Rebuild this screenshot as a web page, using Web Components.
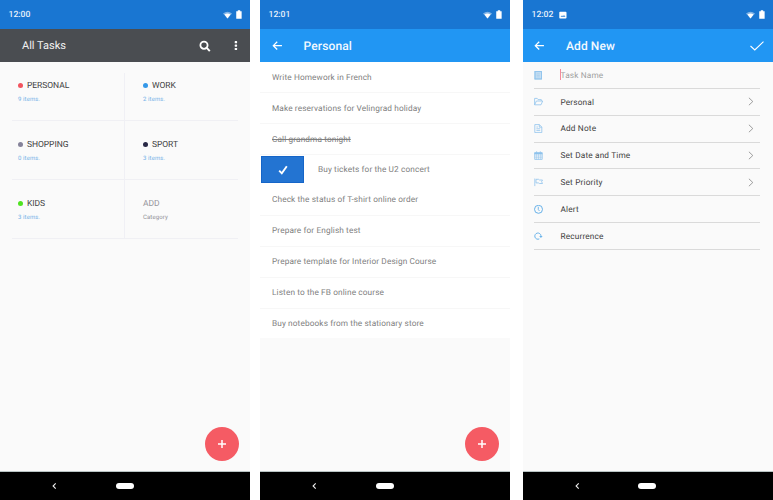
<!DOCTYPE html>
<html lang="en">
<head>
<meta charset="utf-8">
<title>Tasks</title>
<style>
body{margin:0;background:#fff;font-family:Roboto,"Liberation Sans",sans-serif;text-rendering:geometricPrecision;width:773px;height:500px;overflow:hidden}
main{display:grid;grid-template-columns:250px 250px 250px;column-gap:10px;height:500px}
main>:last-child{margin-left:3px;width:250px}
</style>
</head>
<body>
<main>
  <phone-screen time="12:00" fab>
    <app-bar slot="bar" tone="dark" heading="All Tasks"></app-bar>
    <category-grid>
      <category-tile name="PERSONAL" note="9 items." dot="#f2545f"></category-tile>
      <category-tile name="WORK" note="2 items." dot="#3498e8"></category-tile>
      <category-tile name="SHOPPING" note="0 items." dot="#85839a"></category-tile>
      <category-tile name="SPORT" note="3 items." dot="#282845"></category-tile>
      <category-tile name="KIDS" note="3 items." dot="#4fe320"></category-tile>
      <category-tile name="ADD" note="Category"></category-tile>
    </category-grid>
  </phone-screen>
  <phone-screen time="12:01" fab>
    <app-bar slot="bar" heading="Personal" back></app-bar>
    <task-list>
      <task-row>Write Homework in French</task-row>
      <task-row>Make reservations for Velingrad holiday</task-row>
      <task-row done>Call grandma tonight</task-row>
      <task-row swiped>Buy tickets for the U2 concert</task-row>
      <task-row>Check the status of T-shirt online order</task-row>
      <task-row>Prepare for English test</task-row>
      <task-row>Prepare template for Interior Design Course</task-row>
      <task-row>Listen to the FB online course</task-row>
      <task-row>Buy notebooks from the stationary store</task-row>
    </task-list>
  </phone-screen>
  <phone-screen time="12:02" picture>
    <app-bar slot="bar" heading="Add New" back confirm></app-bar>
    <form-row icon="task" field>Task Name</form-row>
    <form-row icon="folder" more>Personal</form-row>
    <form-row icon="note" more>Add Note</form-row>
    <form-row icon="calendar" more>Set Date and Time</form-row>
    <form-row icon="flag" more>Set Priority</form-row>
    <form-row icon="clock">Alert</form-row>
    <form-row icon="repeat">Recurrence</form-row>
  </phone-screen>
</main>
<script>
class Base extends HTMLElement {
  connectedCallback() {
    if (this.shadowRoot) return;
    this.attachShadow({mode: 'open'}).innerHTML =
      '<style>:host,*{box-sizing:border-box}svg{display:block;flex:none}' + this.css() + '</style>' + this.html();
  }
  at(n) { return this.getAttribute(n); }
  has(n) { return this.hasAttribute(n); }
}

customElements.define('phone-screen', class extends Base {
  css() { return `
    :host{display:grid;grid-template-rows:29px 33px 1fr 29px;position:relative;background:#fafafa;height:500px}
    .status{background:#1976d2;display:flex;align-items:center;padding:0 8.5px 0 8.5px;color:#e9f2fb;font-size:8.6px;font-weight:500}
    .status span{padding-top:1px}
    .status .pic{margin-left:6px}
    .status .wifi{margin-left:auto;margin-right:4px}
    .nav{background:#000;border-top:1px solid #b9c4c4;display:flex;align-items:center;padding-left:52px}
    .home{width:18px;height:6.6px;border-radius:4px;background:#fff;margin-left:59px}
    :host([picture]) .home{margin-left:58px}
    .fab{position:absolute;left:205px;top:427px;width:34px;height:34px;border-radius:50%;background:#f55b64;display:grid;place-items:center}`; }
  html() { return `
    <div class="status"><span>${this.at('time')}</span>
      ${this.has('picture') ? '<svg class="pic" width="8" height="8" viewBox="0 0 8 8"><rect x=".3" y=".8" width="7.2" height="6.6" rx=".9" fill="#fff"/><path d="M1.5 6 3 4.2l1 1L5 3.8 6.5 6z" fill="#5d9fe0"/></svg>' : ''}
      <svg class="wifi" width="9" height="8" viewBox="0 0 9 8"><path d="M0 2.4Q4.5-.9 9 2.4L4.5 7.6z" fill="#fff" opacity=".45"/><path d="M1.5 3.5Q4.5 1.6 7.5 3.5L4.5 7.4z" fill="#fff"/></svg>
      <svg width="6" height="9" viewBox="0 0 5 9" preserveAspectRatio="none"><path d="M1.5.3h2v1h1.2v7.4H.2V1.3h1.3z" fill="#fff"/></svg>
    </div>
    <slot name="bar"></slot>
    <div><slot></slot></div>
    <div class="nav"><svg width="5" height="6" viewBox="0 0 5 6"><path d="M3.7.4 1.1 3l2.6 2.6" fill="none" stroke="#eee" stroke-width="1.1"/></svg><div class="home"></div></div>
    ${this.has('fab') ? '<div class="fab"><svg width="10" height="10" viewBox="0 0 10 10"><path d="M5 1v8M1 5h8" stroke="#fff" stroke-width="1.5"/></svg></div>' : ''}`; }
});

customElements.define('app-bar', class extends Base {
  css() { return `
    :host{display:flex;align-items:center;background:#2196f3;color:#f2f9ff;padding:0 0 0 12px;font-size:12px;font-weight:500}
    :host([tone=dark]){background:#4a4d51;color:#f1f1f1;padding-left:22px;font-size:11px;font-weight:400}
    .title{margin-left:20.5px;letter-spacing:.14px}
    :host([confirm]) .title{margin-left:21px;letter-spacing:.1px}
    :host([confirm]){padding-left:11px}
    :host([tone=dark]) .title{margin-left:0;letter-spacing:0}
    .find{margin-left:auto;margin-right:23.5px}.dots{margin-right:12px}.ok{margin-left:auto;margin-right:9px}`; }
  html() { return `
    ${this.has('back') ? '<svg width="11" height="10" viewBox="0 0 11 10.8"><path d="M5.2.8 1 5l4.2 4.2M1 5h9.3" fill="none" stroke="#fff" stroke-width="1.4"/></svg>' : ''}
    <span class="title">${this.at('heading')}</span>
    ${this.at('tone') === 'dark' ? '<svg class="find" width="12" height="12" viewBox="0 0 12 12"><circle cx="5" cy="5.2" r="3.6" fill="none" stroke="#fff" stroke-width="1.8"/><path d="m7.7 7.9 3.1 3.2" stroke="#fff" stroke-width="2"/></svg><svg class="dots" width="4" height="10" viewBox="0 0 4 10"><g fill="#fff"><rect x=".7" y=".1" width="2.4" height="2.2" rx=".6"/><rect x=".7" y="3.5" width="2.4" height="2.2" rx=".6"/><rect x=".7" y="6.9" width="2.4" height="2.2" rx=".6"/></g></svg>' : ''}
    ${this.has('confirm') ? '<svg class="ok" width="14" height="10" viewBox="0 0 14 10"><path d="m.5 5 4.3 4L13.5.6" fill="none" stroke="#fff" stroke-width="1.1"/></svg>' : ''}`; }
});

customElements.define('category-grid', class extends Base {
  css() { return `
    :host{display:block;padding:0 12px}
    .g{display:grid;grid-template-columns:113px 113px;grid-auto-rows:59px;
      background:linear-gradient(#f0f0f5,#f0f0f5) 112px 11px/1px 166px no-repeat}`; }
  html() { return '<div class="g"><slot></slot></div>'; }
});

customElements.define('category-tile', class extends Base {
  css() { return `
    :host{display:flex;flex-direction:column;border-bottom:1px solid #f0f0f4;padding:17px 0 0 6px}
    :host(:nth-child(even)){padding-left:18px}
    .n{display:flex;align-items:center;gap:4px;height:13px;font-size:8.5px;color:#404040;letter-spacing:-.05px}
    .n span{padding-top:1px}
    i{width:5px;height:5px;border-radius:50%;background:${this.at('dot') || 'none'}}
    .c{font-size:6px;line-height:13px;padding-top:.6px;color:#74b2e8;letter-spacing:.1px}
    :host(:not([dot])) .n{color:#96969c}
    :host(:not([dot])) .c{color:#909096}`; }
  html() { return `<div class="n">${this.at('dot') ? '<i></i>' : ''}<span>${this.at('name')}</span></div><div class="c">${this.at('note')}</div>`; }
});

customElements.define('task-list', class extends Base {
  css() { return ':host{display:block;background:#fff;height:276px}'; }
  html() { return '<slot></slot>'; }
});

customElements.define('task-row', class extends Base {
  css() { return `
    :host{display:flex;align-items:center;height:31px;border-bottom:1px solid #f7f7f7;padding-left:12px;font-size:8.25px;color:#808080;letter-spacing:.12px;white-space:nowrap}
    span{padding-top:1.2px}
    :host([done]) span{text-decoration:line-through}
    :host([swiped]){height:29.5px;border:0;padding:0 0 0 1px}
    :host([swiped])~*{padding-top:0}
    :host(:last-child){border:0;height:30px}
    .b{width:43px;height:27px;background:#2374d2;border:1px solid #1565c8;display:grid;place-items:center;margin-right:14px}`; }
  html() { return `${this.has('swiped') ? '<div class="b"><svg width="10" height="10" viewBox="0 0 10 10"><path d="M1.2 5.6 3.8 8.3 8.8 1.2" fill="none" stroke="#fff" stroke-width="1.9"/></svg></div>' : ''}<span><slot></slot></span>`; }
});

const ICONS = {
  task: '<rect x="1" y=".6" width="6.4" height="7.4" fill="#c5def2"/><path d="M.9.4v7.8M7.5.4v7.8M.6.6h7.2M.6 8h7.2"/><path d="M2.6 2.8h3.2M2.6 4.4h3.2M2.6 5.9h3.2" stroke-width=".4"/>',
  folder: '<path d="M.6 7.8V1.4h2.6l.9 1.2h3.2v1.3M.6 7.8 2.4 4h6.3L7 7.8z"/>',
  note: '<path d="M.8.6h4.6l2.4 2.5v5.5H.8zM5.3.6v2.6h2.5M2.4 3h1.5M2.4 4.8h3.8M2.4 6.6h3.8"/>',
  calendar: '<path d="M.4 1.4h8v2h-8z" fill="#8fc3ec" stroke="none"/><path d="M.7 1.8h7.5v6.6H.7zM2.6.3v2M6.3.3v2"/><path d="M.7 5h7.5M.7 6.7h7.5M2.6 3v5.4M4.5 3v5.4M6.4 3v5.4" stroke-width=".5"/>',
  flag: '<path d="M.8.5v7.6M2 1.3h2.5l1 .7h3L7.6 3.7l.9 1.8H5.4l-1-.6H2z"/>',
  clock: '<circle cx="4.5" cy="4.3" r="4" stroke="#58a9e6" stroke-width=".9"/><path d="M4.3 1.8v2.8l1.2 1.4" stroke="#58a9e6"/>',
  repeat: '<path d="M5.3 6.9A3.1 3.1 0 1 1 7 3.9" stroke="#69b3ea" stroke-width="1"/><path d="M5.2 3.9h3.4L6.9 5.9z" fill="#69b3ea" stroke="none"/>'
};
customElements.define('form-row', class extends Base {
  css() { return `
    :host{display:flex;align-items:center;height:26.83px;margin:0 13px 0 11px;border-bottom:1px solid #dadada;font-size:8.25px;color:#404040;letter-spacing:.16px}
    :host([field]){color:#a0a0a0;height:27px}
    .t{margin-left:17.5px;padding-top:1.2px;position:relative}
    .cur{position:absolute;left:-1px;top:0;width:1.3px;height:11px;background:#f48a9e}
    .m{margin-left:auto;margin-right:6px}`; }
  html() { return `<svg width="9" height="9" viewBox="0 0 9 9" fill="none" stroke="#8fc3ec" stroke-width=".8">${ICONS[this.at('icon')]}</svg>
    <span class="t">${this.has('field') ? '<i class="cur"></i>' : ''}<slot></slot></span>
    ${this.has('more') ? '<svg class="m" width="6" height="9" viewBox="0 0 6 9"><path d="M.9.8 4.8 4.5.9 8.2" fill="none" stroke="#858585" stroke-width=".8"/></svg>' : ''}`; }
});
</script>
</body>
</html>
